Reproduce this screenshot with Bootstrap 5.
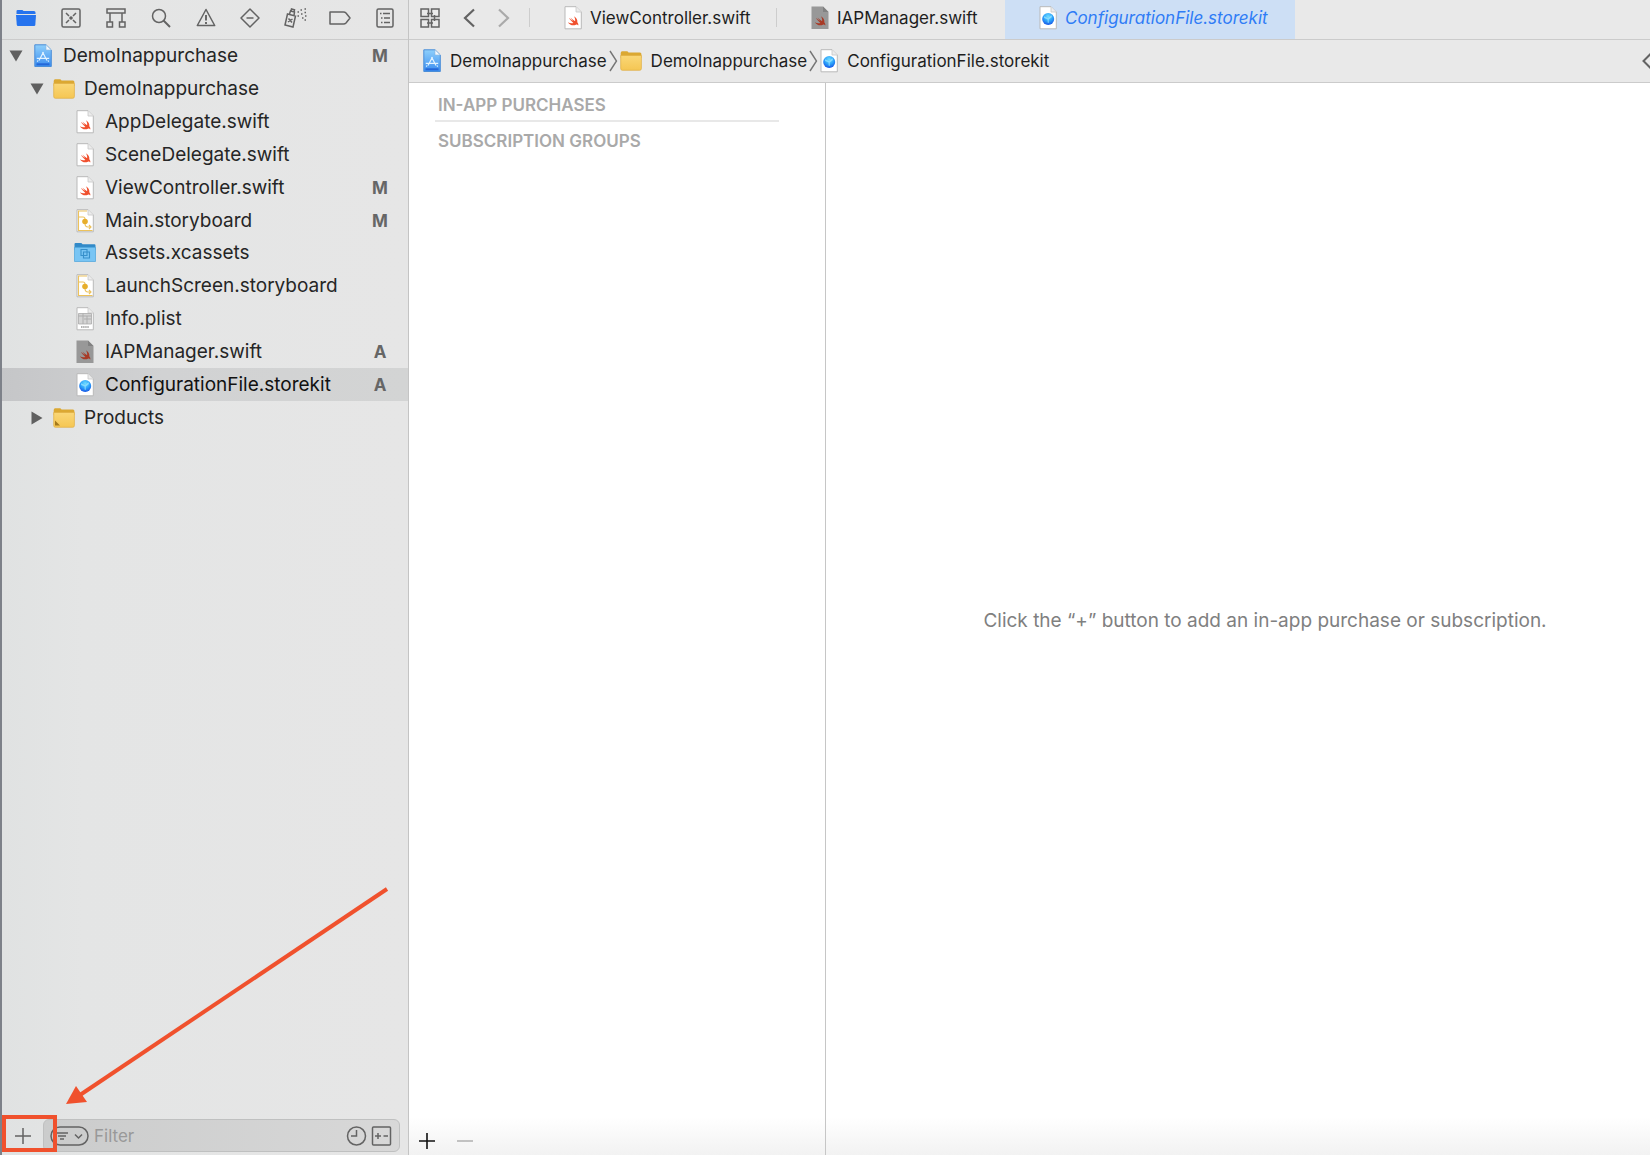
<!DOCTYPE html>
<html lang="en">
<head>
<meta charset="utf-8">
<meta name="viewport" content="width=device-width, initial-scale=1">
<title>DemoInappurchase</title>
<link href="https://cdn.jsdelivr.net/npm/bootstrap@5.3.0/dist/css/bootstrap.min.css" rel="stylesheet">
<script src="https://cdn.jsdelivr.net/npm/bootstrap@5.3.0/dist/js/bootstrap.bundle.min.js"></script>
<style>
body { font-family: Inter, "Liberation Sans", sans-serif; font-size: 17px; line-height: 24px; color: #1e1e1e; background: #fff; }
button { font: inherit; color: inherit; border: 0; background: none; padding: 0; }
svg { display: block; flex: none; }
.navigator { width: 409px; border-left: 2px solid #7d8189; border-right: 1px solid #c4c4c4; background: linear-gradient(90deg, #e0e2e2, #e4e5e5 80px, #e6e6e6); }
.bar-top { height: 40px; padding: 0 1px 4px 2px; border-bottom: 1px solid #cbcbcb; }
.bar-top button { flex: 1 1 0; }
.line { fill: none; stroke: #636363; stroke-width: 1.5; }
.tree { height: 394px; font-size: 19px; color: #262626; }
.tree-row { height: 100%; width: 100%; text-align: left; padding-right: 14px; }
.tree li.chosen { background: linear-gradient(90deg, #c5c6c8, #d1d2d3 160px, #d3d4d4); color: #111; }
.lvl-0 { padding-left: 7px; } .lvl-1 { padding-left: 28px; } .lvl-2 { padding-left: 49px; }
.disc { width: 14px; margin-right: 9px; }
.kind { width: 22px; margin-right: 9px; display: flex; justify-content: center; }
.state { width: 28px; text-align: center; font-size: 17px; font-weight: 700; color: #666; }
.foot { height: 36px; padding: 0 8px 3px 0; }
.foot-add { width: 41px; }
.filter-box { border: 1px solid #bfc0c0; border-radius: 6px; background: linear-gradient(90deg, #cbcccc, #d8d8d8); height: 33px; min-width: 0; padding: 0 7px 0 6px; }
.filter-box input { border: 0; background: none; outline: 0; width: 0; min-width: 0; padding: 0; color: #333; }
.filter-box input::placeholder { color: #999; opacity: 1; }
.bars { background: #e9e9e9; }
.tab-item { height: 39px; padding: 0 0 4px 34px; gap: 8px; white-space: nowrap; }
.tab-item.w-a { width: 246px; } .tab-item.w-b { width: 228px; }
.tab-item.on { width: 290px; background: #cddff5; color: #2f7cf6; font-style: italic; }
.sep { width: 1px; height: 19px; background: #cdcdcd; margin-bottom: 4px; }
.tab-tools { width: 120px; padding: 0 19px 4px 11px; }
.jump { height: 43px; border-bottom: 1px solid #cbcbcb; padding-left: 14px; }
.crumb { gap: 9px; }
.jump-angle { margin: 0 2px; }
.purchases { width: 417px; border-right: 1px solid #c6c6c6; padding: 9px 46px 0 26px; }
.purchases h2 { font-size: 17px; line-height: 26px; font-weight: 600; color: #a9a9a9; margin: 0; padding-left: 3px; }
.purchases h2 + h2 { border-top: 2px solid #e8e8e8; margin-top: 2px; padding-top: 6px; }
.list-foot { height: 28px; margin: 0 -46px 0 -26px; padding: 0 8px; gap: 18px; }
.editor-body { background: linear-gradient(0deg, #f2f2f2, #fff 38px); }
.hint { font-size: 19px; color: #808080; padding: 4px 0 0 54px; }
.callout { left: 0; bottom: 0; pointer-events: none; }
</style>
</head>
<body>
<svg width="0" height="0" class="position-absolute" aria-hidden="true">
<defs>
<linearGradient id="gBlue" x1="0" y1="0" x2="0" y2="1"><stop offset="0" stop-color="#8fd0fb"/><stop offset="1" stop-color="#3b8df0"/></linearGradient>
<linearGradient id="gYel" x1="0" y1="0" x2="0" y2="1"><stop offset="0" stop-color="#fad777"/><stop offset="1" stop-color="#f5c653"/></linearGradient>
<radialGradient id="gBall" cx=".5" cy=".3" r=".7"><stop offset="0" stop-color="#6fdcff"/><stop offset=".55" stop-color="#2ba2fa"/><stop offset="1" stop-color="#1857e6"/></radialGradient>
<symbol id="bird" viewBox="0 0 12 10"><path d="M6.4.3C9 1.900 10.300 4.300 9.800 6.300 10.900 7.500 11 8.700 10.700 9.400 10 8.400 9 8.400 8 8.900 5.200 10 2 8.800.3 6.200 2.200 7.400 4.400 7.700 5.900 6.900 4.200 5.500 2.500 3.700 1.300 1.800 2.900 3.200 4.600 4.500 5.600 5.100 4.600 4 3.600 2.700 2.800 1.500 4.300 3 6 4.300 7.600 5.300 7.900 3.800 7.500 2 6.400.3Z"/></symbol>
<symbol id="page" viewBox="0 0 18 24"><path d="M1 .7H12L17.300 6V22.800H1Z" fill="#fff" stroke="#b9b9b9" stroke-width="1"/><path d="M12 .7V6H17.300" fill="#ececec" stroke="#c6c6c6" stroke-width=".8"/></symbol>
<symbol id="swift" viewBox="0 0 18 24"><use href="#page" width="18" height="24"/><use href="#bird" x="3.500" y="10" width="12" height="10" fill="#f0502e"/></symbol>
<symbol id="swiftdim" viewBox="0 0 18 24"><path d="M.5.5H12L17.500 6V23H.5Z" fill="#989898"/><path d="M12 .5V6H17.500Z" fill="#818181"/><use href="#bird" x="3.500" y="10" width="12" height="10" fill="#a83a26"/></symbol>
<symbol id="store" viewBox="0 0 18 24"><use href="#page" width="18" height="24"/><circle cx="9.200" cy="13" r="6" fill="url(#gBall)"/><path d="M5 10.300 9 12 12.500 9.300 13 11 9.800 13.600V17L8.600 16.500V13.500L5 12Z" fill="#9be6ff" opacity=".7"/></symbol>
<symbol id="proj" viewBox="0 0 18 24"><path d="M.8.8H12L17.300 6V22.500H.8Z" fill="url(#gBlue)" stroke="#4b8ed8"/><path d="M12 .8V6H17.300Z" fill="#f3f8fd" stroke="#8cb7df" stroke-width=".6"/><path d="M2.500 19.300H15.500V21.300H2.500Z" fill="#2468d8"/><path d="M9.500 8 5 16.500M8.500 8 13 16.500M2.800 14.300H15.200M4 16.500 3.300 17.600M14 16.500 14.700 17.600" stroke="#e2f3ff" stroke-width="1.200" fill="none"/></symbol>
<symbol id="folder" viewBox="0 0 22 22"><path d="M.7 3Q.7 1.300 2.200 1.300H6.700Q8 1.300 8.500 2.500H20Q21.400 2.500 21.400 4V8H.7Z" fill="#dba832"/><path d="M.7 5.500H21.400V18.500Q21.400 20.300 19.800 20.300H2.300Q.7 20.300.7 18.500Z" fill="url(#gYel)" stroke="#e0ae42" stroke-width=".7"/></symbol>
<symbol id="group" viewBox="0 0 22 22"><use href="#folder" width="22" height="22"/><path d="M2 13.500V18.500H7Z" fill="#a4781b"/></symbol>
<symbol id="assets" viewBox="0 0 22 22"><path d="M.5 2Q.5 1 1.500 1H6.500Q8 1 8.500 2.300H20.500Q21.500 2.300 21.500 3.500V8H.5Z" fill="#3189c8"/><path d="M.5 5.300H21.500V19.500H.5Z" fill="#79c5f4" stroke="#4ba3da" stroke-width=".7"/><path d="M7 7.500H13V13.500H7ZM9.500 10H15.500V16H9.500Z" fill="none" stroke="#3790cb" stroke-width="1.100"/></symbol>
<symbol id="board" viewBox="0 0 18 24"><use href="#page" width="18" height="24"/><path d="M2.500 22V2H11M2 8H7Q9 8 9 10V14.500Q9 18 12 18H15M13 16 15 18 13 20M2 21.500H16.500" fill="none" stroke="#ecc25c" stroke-width="1.100"/><circle cx="9" cy="12.500" r="2.800" fill="#e7ae2b"/></symbol>
<symbol id="plist" viewBox="0 0 18 24"><use href="#page" width="18" height="24"/><path d="M2.500 6.500H15.500V17H2.500Z" fill="#d4d4d4" stroke="#a9a9a9" stroke-width=".8"/><path d="M2.500 9H15.500M7 6.500V17M11 9V17M8 12H15" stroke="#aaa" stroke-width=".9"/><path d="M5 20H13" stroke="#999" stroke-width="1.500" stroke-dasharray="1.500 .6"/></symbol>
<symbol id="down" viewBox="0 0 14 14"><path d="M.5 1.500H13.500L7 12.500Z" fill="#606060"/></symbol>
<symbol id="right" viewBox="0 0 14 14"><path d="M1.500.5 12.500 7 1.500 13.500Z" fill="#606060"/></symbol>
<symbol id="angle" viewBox="0 0 9 22"><path d="M1 1 7.500 11 1 21" fill="none" stroke="#757575" stroke-width="1.400"/></symbol>
</defs>
</svg>

<div class="d-flex vh-100 overflow-hidden">
  <aside class="navigator d-flex flex-column flex-shrink-0 position-relative">
    <nav class="bar-top d-flex align-items-center" aria-label="Navigators">
      <button class="d-flex justify-content-center" aria-label="Project"><svg width="20" height="18" viewBox="0 0 20 18"><path d="M.5 5V2.300Q.5 1 1.800 1H6Q7 1 7.500 2H18Q19.500 2 19.500 3.500V5Z" fill="#2573ee"/><path d="M0 6H20L19.300 16Q19.200 17 18 17H2Q.9 17 .8 16Z" fill="#2573ee"/></svg></button>
      <button class="d-flex justify-content-center" aria-label="Source control"><svg class="line" width="20" height="20"><rect x="1" y="1" width="18" height="18" rx="1.500"/><path d="M5 5 8 8M15 5 12 8M5 15 8 12M15 15 12 12"/><circle cx="10" cy="10" r="1.800" fill="#636363" stroke="none"/></svg></button>
      <button class="d-flex justify-content-center" aria-label="Symbols"><svg class="line" width="20" height="20"><path d="M1 1H19V5H1ZM4 5V14M16 5V14M1 14H6.500V19H1ZM13.500 14H19V19H13.500Z"/></svg></button>
      <button class="d-flex justify-content-center" aria-label="Find"><svg class="line" width="20" height="20"><circle cx="8" cy="8" r="6.500"/><path d="M12.500 12.500 19 19" stroke-width="2"/></svg></button>
      <button class="d-flex justify-content-center" aria-label="Issues"><svg class="line" width="20" height="20"><path d="M10 1.500 18.700 17.500H1.300Z" stroke-linejoin="round"/><path d="M10 7V12.500M10 14V16" stroke-width="1.900"/></svg></button>
      <button class="d-flex justify-content-center" aria-label="Tests"><svg class="line" width="20" height="20"><path d="M10 1 19 10 10 19 1 10Z" stroke-linejoin="round"/><path d="M6.500 10H13.500"/></svg></button>
      <button class="d-flex justify-content-center" aria-label="Debug"><svg class="line" width="23" height="20"><path d="M3.500 6 11.500 8 9 19 1 17ZM5.500 6 6.500 3 10.500 4 10 7.500M7 3 7.500 1 10.500 1.800 10 4M4.500 10.500 8 14.500M8.500 11 4 14"/><path d="M13.500 4H15M13.500 8H15M16.500 2H18M17 6H18.500M20.500 1H22M20.500 4.500H22M18 10H19.500M21 8H22.500M20.500 12H22" stroke-width="1.500"/></svg></button>
      <button class="d-flex justify-content-center" aria-label="Breakpoints"><svg class="line" width="22" height="20"><path d="M1 4H14.500Q16 4 17 5L21 10 17 15Q16 16 14.500 16H1Z" stroke-linejoin="round"/></svg></button>
      <button class="d-flex justify-content-center" aria-label="Reports"><svg class="line" width="18" height="20"><rect x="1" y="1" width="16" height="18" rx="1.500"/><path d="M4 5.500H5.500M7 5.500H14M5 10H6.500M8 10H14M5 14.500H6.500M8 14.500H14"/></svg></button>
    </nav>

    <ul class="tree list-unstyled m-0 d-flex flex-column">
      <li class="flex-fill"><button class="tree-row lvl-0 d-flex align-items-center"><svg class="disc" height="14"><use href="#down"/></svg><span class="kind"><svg width="18" height="24"><use href="#proj"/></svg></span><span>DemoInappurchase</span><span class="state ms-auto">M</span></button></li>
      <li class="flex-fill"><button class="tree-row lvl-1 d-flex align-items-center"><svg class="disc" height="14"><use href="#down"/></svg><span class="kind"><svg width="22" height="22"><use href="#folder"/></svg></span><span>DemoInappurchase</span></button></li>
      <li class="flex-fill"><button class="tree-row lvl-2 d-flex align-items-center"><span class="disc"></span><span class="kind"><svg width="18" height="24"><use href="#swift"/></svg></span><span>AppDelegate.swift</span></button></li>
      <li class="flex-fill"><button class="tree-row lvl-2 d-flex align-items-center"><span class="disc"></span><span class="kind"><svg width="18" height="24"><use href="#swift"/></svg></span><span>SceneDelegate.swift</span></button></li>
      <li class="flex-fill"><button class="tree-row lvl-2 d-flex align-items-center"><span class="disc"></span><span class="kind"><svg width="18" height="24"><use href="#swift"/></svg></span><span>ViewController.swift</span><span class="state ms-auto">M</span></button></li>
      <li class="flex-fill"><button class="tree-row lvl-2 d-flex align-items-center"><span class="disc"></span><span class="kind"><svg width="18" height="24"><use href="#board"/></svg></span><span>Main.storyboard</span><span class="state ms-auto">M</span></button></li>
      <li class="flex-fill"><button class="tree-row lvl-2 d-flex align-items-center"><span class="disc"></span><span class="kind"><svg width="22" height="22"><use href="#assets"/></svg></span><span>Assets.xcassets</span></button></li>
      <li class="flex-fill"><button class="tree-row lvl-2 d-flex align-items-center"><span class="disc"></span><span class="kind"><svg width="18" height="24"><use href="#board"/></svg></span><span>LaunchScreen.storyboard</span></button></li>
      <li class="flex-fill"><button class="tree-row lvl-2 d-flex align-items-center"><span class="disc"></span><span class="kind"><svg width="18" height="24"><use href="#plist"/></svg></span><span>Info.plist</span></button></li>
      <li class="flex-fill"><button class="tree-row lvl-2 d-flex align-items-center"><span class="disc"></span><span class="kind"><svg width="18" height="24"><use href="#swiftdim"/></svg></span><span>IAPManager.swift</span><span class="state ms-auto">A</span></button></li>
      <li class="flex-fill chosen"><button class="tree-row lvl-2 d-flex align-items-center"><span class="disc"></span><span class="kind"><svg width="18" height="24"><use href="#store"/></svg></span><span>ConfigurationFile.storekit</span><span class="state ms-auto">A</span></button></li>
      <li class="flex-fill"><button class="tree-row lvl-1 d-flex align-items-center"><svg class="disc" height="14"><use href="#right"/></svg><span class="kind"><svg width="22" height="22"><use href="#group"/></svg></span><span>Products</span></button></li>
    </ul>

    <div class="foot d-flex align-items-center mt-auto">
      <button class="foot-add d-flex flex-shrink-0 justify-content-center" aria-label="Add"><svg class="line" width="18" height="18"><path d="M9 1V17M1 9H17"/></svg></button>
      <div class="filter-box d-flex align-items-center flex-fill">
        <button class="flex-shrink-0" aria-label="Filter options"><svg class="line" width="40" height="20"><rect x="1" y="1" width="37" height="18" rx="9"/><path d="M6 7H18M8 10H16M10 13H14M25 8.500 28.500 12 32 8.500"/></svg></button>
        <input id="filter" class="flex-fill ms-1" type="text" placeholder="Filter" aria-label="Filter">
        <button class="me-1" aria-label="Recent files"><svg class="line" width="21" height="20"><circle cx="10.500" cy="10" r="9"/><path d="M10.500 4V10H5"/></svg></button>
        <button aria-label="Files with source control status"><svg class="line" width="21" height="20"><rect x="1.500" y="1" width="18" height="18" rx="1"/><path d="M4 10H10M7 7V13M12.500 10H17"/></svg></button>
      </div>
    </div>
    <svg class="callout position-absolute" width="406" height="280" viewBox="2 875 406 280" aria-hidden="true"><path d="M387 889 80 1095" stroke="#f0512d" stroke-width="4"/><path d="M66 1104 76 1086 87 1102Z" fill="#f0512d"/><rect x="4" y="1117" width="51" height="33" fill="none" stroke="#f0512d" stroke-width="4"/></svg>
  </aside>

  <main class="d-flex flex-column flex-fill overflow-hidden">
    <header class="bars">
      <div class="d-flex align-items-center border-bottom" style="--bs-border-color:#cbcbcb">
        <div class="tab-tools d-flex align-items-center justify-content-between">
          <button aria-label="Related items"><svg class="line" width="20" height="20"><path d="M1 1H8.500V8.500H1ZM11.500 1H19V8.500H11.500ZM1 11.500H8.500V19H1ZM11.500 11.500H19V19H11.500ZM7 5.500H13M14.500 7V13M7 15H13"/></svg></button>
          <button aria-label="Back"><svg class="line" width="12" height="20"><path d="M11 1.500 2 10 11 18.500" stroke-width="2.200"/></svg></button>
          <button aria-label="Forward"><svg class="line" width="12" height="20"><path d="M1 1.500 10 10 1 18.500" stroke="#aaa" stroke-width="2.200"/></svg></button>
        </div>
        <div class="sep"></div>
        <button class="tab-item w-a d-flex align-items-center"><svg width="18" height="24"><use href="#swift"/></svg><span>ViewController.swift</span></button>
        <div class="sep"></div>
        <button class="tab-item w-b d-flex align-items-center"><svg width="18" height="24"><use href="#swiftdim"/></svg><span>IAPManager.swift</span></button>
        <button class="tab-item on d-flex align-items-center"><svg width="18" height="24"><use href="#store"/></svg><span>ConfigurationFile.storekit</span></button>
      </div>
      <nav class="jump d-flex align-items-center" aria-label="Jump bar">
        <button class="crumb d-flex align-items-center"><svg width="18" height="24"><use href="#proj"/></svg><span>DemoInappurchase</span></button>
        <svg class="jump-angle" width="9" height="22"><use href="#angle"/></svg>
        <button class="crumb d-flex align-items-center"><svg width="22" height="22"><use href="#folder"/></svg><span>DemoInappurchase</span></button>
        <svg class="jump-angle" width="9" height="22"><use href="#angle"/></svg>
        <button class="crumb d-flex align-items-center"><svg width="18" height="24"><use href="#store"/></svg><span>ConfigurationFile.storekit</span></button>
        <button class="ms-auto" aria-label="Previous issue"><svg class="line" width="8" height="18"><path d="M9 1.500 1.500 9 9 16.500" stroke-width="2"/></svg></button>
      </nav>
    </header>
    <div class="editor-body d-flex flex-fill">
      <section class="purchases d-flex flex-column flex-shrink-0">
        <h2>IN-APP PURCHASES</h2>
        <h2>SUBSCRIPTION GROUPS</h2>
        <div class="list-foot d-flex mt-auto">
          <button class="d-flex" aria-label="Add product"><svg width="20" height="28"><path d="M10 6V22M2 14H18" stroke="#111" stroke-width="1.600"/></svg></button>
          <button class="d-flex" aria-label="Remove product" disabled><svg width="20" height="28"><path d="M2 14H18" stroke="#b5b5b5" stroke-width="1.600"/></svg></button>
        </div>
      </section>
      <section class="hint flex-fill d-flex align-items-center justify-content-center"><span>Click the “+” button to add an in-app purchase or subscription.</span></section>
    </div>
  </main>
</div>
</body>
</html>
